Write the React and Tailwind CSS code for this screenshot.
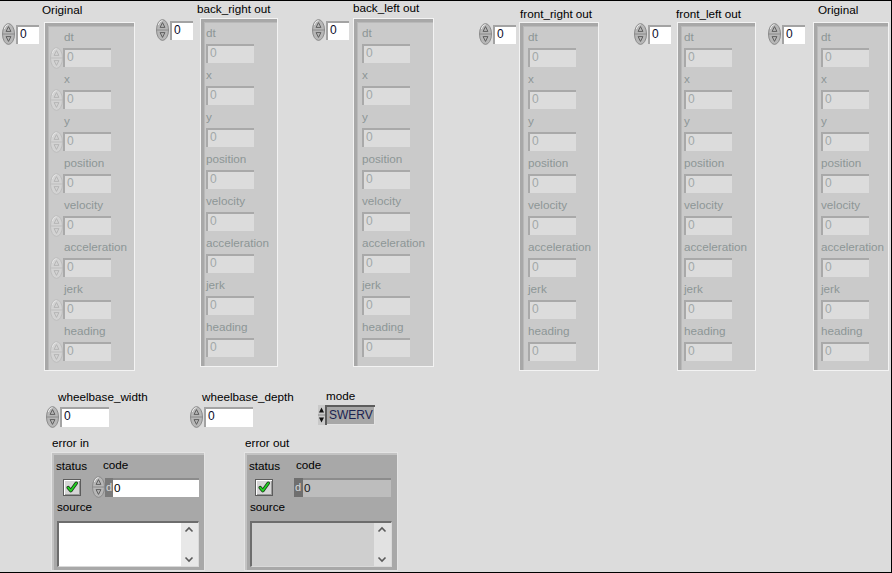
import React from 'react';

const FONT = "font-['Liberation_Sans',Arial,sans-serif]";
const FIELDS = ['dt', 'x', 'y', 'position', 'velocity', 'acceleration', 'jerk', 'heading'];

// little oval up/down spinner used by numeric controls
function Spinner({ disabled = false }) {
  const body = disabled ? '#d3d3d3' : '#b7b7b7';
  const edge = disabled ? '#bdbdbd' : '#8a8a8a';
  const mark = disabled ? '#b2b2b2' : '#555555';
  const hi = disabled ? '#e4e4e4' : '#ececec';
  return (
    <svg width="13" height="22" viewBox="0 0 13 22" className="block shrink-0">
      <ellipse cx="6.5" cy="11" rx="6" ry="10.4" fill={body} stroke={edge} />
      <path d="M2.2 6 Q3.5 1.8 6.5 1.4" fill="none" stroke={hi} />
      <line x1="0.8" y1="11" x2="12.2" y2="11" stroke={edge} />
      <path d="M6.5 3.6 L8.9 8.4 L4.1 8.4 Z" fill="none" stroke={mark} strokeWidth="0.9" />
      <path d="M6.5 18.4 L8.9 13.6 L4.1 13.6 Z" fill="none" stroke={mark} strokeWidth="0.9" />
    </svg>
  );
}

function NumControl({ boxCls = 'w-[23px] h-[19px]' }) {
  return (
    <div className="flex items-center">
      <Spinner />
      <div className={`ml-[1px] bg-white shadow-[inset_2px_2px_0_#a3a3a3] pl-[4px] pt-[2px] text-[12px] leading-[15px] text-[#0b0b2a] ${boxCls}`}>
        0
      </div>
    </div>
  );
}

function DimItem({ label, spin }) {
  return (
    <div className="flex flex-col">
      <div className={`h-[18px] leading-[14px] text-[#8d9696] whitespace-nowrap ${spin ? 'pl-[14px]' : ''}`}>
        {label}
      </div>
      <div className="flex items-center h-[19px]">
        {spin && <Spinner disabled />}
        <div className="w-[48px] h-[19px] bg-[#dcdcdc] shadow-[inset_2px_2px_0_#a9a9a9] pl-[4px] pt-[2px] leading-[15px] text-[12px] text-[#a2a8a8]">
          0
        </div>
      </div>
    </div>
  );
}

function Cluster({ cls, spin }) {
  return (
    <div className={`w-full h-[349px] border border-[#f3f3f3] bg-[#cacaca] shadow-[inset_3px_3px_0_#a8a8a8,inset_4px_4px_0_#b9b9b9] pt-[7px] flex flex-col gap-[5px] ${cls}`}>
      {FIELDS.map((f) => (
        <DimItem key={f} label={f} spin={spin} />
      ))}
    </div>
  );
}

function Column({ title, numCls, rightCls, labelCls, clusterCls, spin }) {
  return (
    <div className="flex items-start shrink-0">
      <div className={numCls}>
        <NumControl />
      </div>
      <div className={`flex flex-col shrink-0 ${rightCls}`}>
        <div className={`h-[14px] leading-[14px] text-black whitespace-nowrap ${labelCls}`}>{title}</div>
        <Cluster cls={clusterCls} spin={spin} />
      </div>
    </div>
  );
}

function CheckBox() {
  return (
    <div className="w-[18px] h-[17px] shrink-0 bg-[#d6d6d6] border border-[#5c5c5c] shadow-[inset_1px_1px_0_#ffffff,inset_-1px_-1px_0_#9a9a9a] flex items-center justify-center">
      <svg width="12" height="12" viewBox="0 0 12 12">
        <path d="M2.2 6.6 L4.8 9.8 L10.2 2.2" fill="none" stroke="#1a3a1a" strokeWidth="3.4" strokeLinecap="round" strokeLinejoin="round" />
        <path d="M2.2 6.6 L4.8 9.8 L10.2 2.2" fill="none" stroke="#22d422" strokeWidth="1.8" strokeLinecap="round" strokeLinejoin="round" />
      </svg>
    </div>
  );
}

function Chevron({ up }) {
  return (
    <svg width="16" height="9" viewBox="0 0 16 9" className="block">
      <polyline
        points={up ? '4.5,6.5 8,3 11.5,6.5' : '4.5,2.5 8,6 11.5,2.5'}
        fill="none"
        stroke="#5a5a5a"
        strokeWidth="1.6"
      />
    </svg>
  );
}

function SourceBox({ out }) {
  return (
    <div className={`mt-[7px] ml-[5px] w-[142px] h-[46px] flex border-t-2 border-l-2 border-t-[#6d6d6d] border-l-[#6d6d6d] border-r border-b border-r-[#d9d9d9] border-b-[#d9d9d9] ${out ? 'bg-[#cfcfcf]' : 'bg-white'}`}>
      <div className="flex-1" />
      <div className={`w-[17px] flex flex-col justify-between py-[2px] ${out ? 'bg-[#e2e2e2]' : 'bg-[#e8e8e8]'}`}>
        <Chevron up />
        <Chevron />
      </div>
    </div>
  );
}

function ErrorCluster({ title, out, groupCls }) {
  return (
    <div className={`flex flex-col shrink-0 ${groupCls}`}>
      <div className="ml-[1px] h-[14px] leading-[14px] text-black">{title}</div>
      <div className="mt-[2px] w-[154px] h-[119px] bg-[#a8a8a8] border border-[#e4e4e4] shadow-[inset_2px_2px_0_#c3c3c3] pt-[6px] flex flex-col text-black">
        <div className="flex h-[14px] leading-[14px]">
          <span className="ml-[4px] w-[47px]">status</span>
          <span className="-mt-[1px]">code</span>
        </div>
        <div className="flex items-center mt-[3px] h-[22px]">
          {out ? (
            <>
              <div className="ml-[10px]">
                <CheckBox />
              </div>
              <div className="ml-[21px] w-[97px] h-[19px] flex bg-[#bdbdbd] shadow-[inset_2px_2px_0_#8c8c8c]">
                <div className="w-[9px] bg-[#6f6f6f] text-[#d8d8d8] text-[11px] leading-[19px] pl-[1px]">d</div>
                <div className="pl-[1px] leading-[19px] text-[#1a1a1a]">0</div>
              </div>
            </>
          ) : (
            <>
              <div className="ml-[11px]">
                <CheckBox />
              </div>
              <div className="ml-[11px]">
                <Spinner />
              </div>
              <div className="w-[94px] h-[19px] flex bg-white shadow-[inset_2px_2px_0_#8c8c8c]">
                <div className="w-[8px] bg-[#7a7a7a] text-[#d8d8d8] text-[11px] leading-[19px] pl-[1px]">d</div>
                <div className="pl-[1px] leading-[19px] text-black">0</div>
              </div>
            </>
          )}
        </div>
        <div className="mt-[2px] ml-[5px] h-[14px] leading-[14px]">source</div>
        <SourceBox out={out} />
      </div>
    </div>
  );
}

export default function App() {
  return (
    <div className={`w-[892px] h-[573px] bg-[#dcdcdc] border-t border-r border-b border-black overflow-hidden flex flex-col text-[11.7px] ${FONT}`}>
      {/* top row: clusters */}
      <div className="flex items-start h-[370px] shrink-0">
        <Column
          title="Original"
          numCls="ml-[2px] mt-[22px]"
          rightCls="ml-[5px] mt-[2px] w-[91px]"
          labelCls="-ml-[2px] mb-[5px]"
          clusterCls="pl-[5px]"
          spin
        />
        <Column
          title="back_right out"
          numCls="ml-[21px] mt-[18px]"
          rightCls="ml-[7px] mt-[1px] w-[78px]"
          labelCls="-ml-[3px] mb-[2px]"
          clusterCls="pl-[5px]"
        />
        <Column
          title="back_left out"
          numCls="ml-[34px] mt-[18px]"
          rightCls="ml-[4px] w-[81px]"
          labelCls="mb-[3px]"
          clusterCls="pl-[8px]"
        />
        <Column
          title="front_right out"
          numCls="ml-[45px] mt-[22px]"
          rightCls="ml-[3px] mt-[6px] w-[80px]"
          labelCls="ml-[1px] mb-[1px]"
          clusterCls="pl-[8px]"
        />
        <Column
          title="front_left out"
          numCls="ml-[35px] mt-[22px]"
          rightCls="ml-[6px] mt-[6px] w-[79px]"
          labelCls="-ml-[1px] mb-[1px]"
          clusterCls="pl-[6px]"
        />
        <Column
          title="Original"
          numCls="ml-[12px] mt-[22px]"
          rightCls="ml-[8px] mt-[2px] w-[76px]"
          labelCls="ml-[5px] mb-[5px]"
          clusterCls="pl-[7px]"
        />
      </div>

      {/* wheelbase + mode */}
      <div className="flex items-start mt-[19px] shrink-0">
        <div className="ml-[46px] w-[144px] flex flex-col shrink-0">
          <div className="ml-[12px] h-[14px] leading-[14px] text-black whitespace-nowrap">wheelbase_width</div>
          <div className="mt-[2px]">
            <NumControl boxCls="w-[49px] h-[20px]" />
          </div>
        </div>
        <div className="w-[128px] flex flex-col shrink-0">
          <div className="ml-[12px] h-[14px] leading-[14px] text-black whitespace-nowrap">wheelbase_depth</div>
          <div className="mt-[2px]">
            <NumControl boxCls="w-[49px] h-[20px]" />
          </div>
        </div>
        <div className="-mt-[1px] flex flex-col shrink-0">
          <div className="ml-[8px] h-[14px] leading-[14px] text-black">mode</div>
          <div className="mt-[2px] flex items-center">
            <svg width="7" height="20" viewBox="0 0 7 20" className="block">
              <rect x="0" y="0" width="7" height="20" fill="#c9c9c9" />
              <path d="M3.5 2.5 L6 7.5 L1 7.5 Z" fill="#111" />
              <line x1="0" y1="10" x2="7" y2="10" stroke="#8a8a8a" />
              <path d="M3.5 17.5 L6 12.5 L1 12.5 Z" fill="#111" />
            </svg>
            <div className="w-[50px] h-[20px] bg-[#a7a7a7] shadow-[inset_2px_2px_0_#5c5c5c,inset_-1px_-1px_0_#e2e2e2] pl-[4px] pt-[2px] leading-[16px] text-[12px] text-[#1b2350]">
              SWERV
            </div>
          </div>
        </div>
      </div>

      {/* error clusters */}
      <div className="flex items-start mt-[8px] shrink-0">
        <ErrorCluster title="error in" groupCls="ml-[51px] w-[193px]" />
        <ErrorCluster title="error out" out groupCls="w-[153px]" />
      </div>
    </div>
  );
}
